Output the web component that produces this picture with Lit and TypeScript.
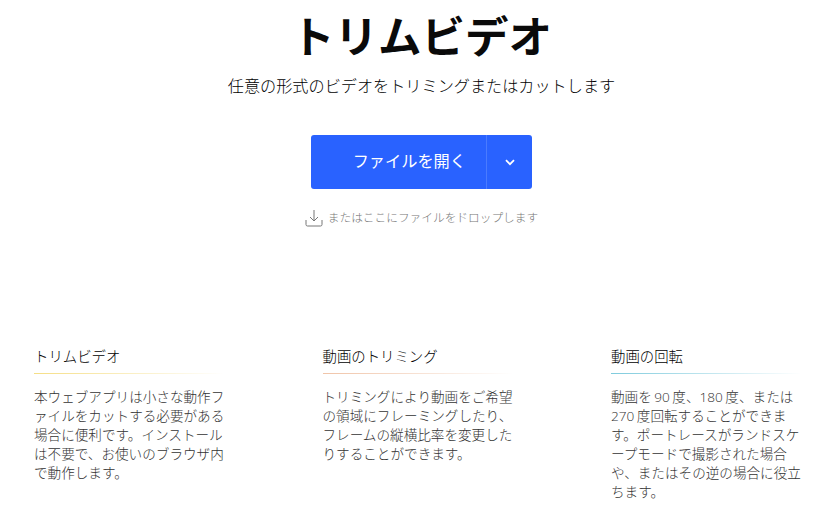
import { LitElement, html, css } from "lit";
import { customElement } from "lit/decorators.js";

const features = [
  { title: "トリムビデオ", cls: "yellow", lines: ["本ウェブアプリは小さな動作フ", "ァイルをカットする必要がある", "場合に便利です。インストール", "は不要で、お使いのブラウザ内", "で動作します。"] },
  { title: "動画のトリミング", cls: "peach", lines: ["トリミングにより動画をご希望", "の領域にフレーミングしたり、", "フレームの縦横比率を変更した", "りすることができます。"] },
  { title: "動画の回転", cls: "blue", lines: ["動画を 90 度、180 度、または", "270 度回転することができま", "す。ポートレースがランドスケ", "ープモードで撮影された場合", "や、またはその逆の場合に役立", "ちます。"] },
];

@customElement("app-root")
export class AppRoot extends LitElement {
  static styles = css`
    :host { display: block; width: 827px; height: 508px; overflow: hidden; background: #fff; font-family: "Open Sans", "Noto Sans CJK JP", sans-serif; }
    .hero { display: flex; flex-direction: column; align-items: center; padding: 7px 0 0 16px; }
    h1 { margin: 0; font: 700 43.5px/62px "Liberation Sans", "Noto Sans CJK JP", sans-serif; color: #0a0a0a; }
    .sub { margin: 5px 0 0; font-size: 16.15px; line-height: 24px; font-weight: 300; color: #000; }
    .split { display: flex; width: 221px; height: 54px; margin-top: 37px; background: #2962ff; border-radius: 3px; color: #fff; }
    .main { flex: 1; display: flex; align-items: center; justify-content: flex-end; padding: 0 20px 4px 0; font-size: 16.2px; font-weight: 400; border-right: 1px solid #4a7bff; }
    .arrow { width: 45px; display: flex; align-items: center; justify-content: center; }
    .drop { display: flex; align-items: center; gap: 5px; margin-top: 19px; font-size: 11.7px; line-height: 20px; font-weight: 300; color: #777; }
    .drop span { margin-top: -1px; }
    .features { display: flex; padding: 120px 0 0 34px; }
    .f { width: 288.5px; flex: none; }
    h2 { margin: 0; width: 190px; padding-bottom: 6px; font-weight: 300; font-size: 14.4px; line-height: 20px; color: #000; }
    .rule { height: 1px; width: 190px; }
    .yellow { background: linear-gradient(90deg, #f5de85, #fff); }
    .peach { background: linear-gradient(90deg, #f0c4a8, #fff); }
    .blue { background: linear-gradient(90deg, #7fcbdd, #fff); }
    p { margin: 13px 0 0; font-size: 13.6px; line-height: 19px; font-weight: 300; color: #333; white-space: nowrap; word-spacing: -1px; }
  `;
  render() {
    return html`
      <div class="hero">
        <h1>トリムビデオ</h1>
        <div class="sub">任意の形式のビデオをトリミングまたはカットします</div>
        <div class="split">
          <div class="main">ファイルを開く</div>
          <div class="arrow"><svg width="10" height="7" viewBox="0 0 10 7" fill="none" stroke="#fff" stroke-width="1.8"><path d="M1 1.2 5 5.2 9 1.2"/></svg></div>
        </div>
        <div class="drop">
          <svg width="18" height="18" viewBox="0 0 18 18" fill="none" stroke="#777" stroke-width="1"><path d="M9 1v11M5 8l4 4 4-4M1 11v4.5a1.5 1.5 0 0 0 1.5 1.5h13a1.5 1.5 0 0 0 1.5-1.5V11"/></svg>
          <span>またはここにファイルをドロップします</span>
        </div>
      </div>
      <div class="features">
        ${features.map(f => html`<div class="f"><h2>${f.title}</h2><div class="rule ${f.cls}"></div><p>${f.lines.map(l => html`${l}<br>`)}</p></div>`)}
      </div>
    `;
  }
}
